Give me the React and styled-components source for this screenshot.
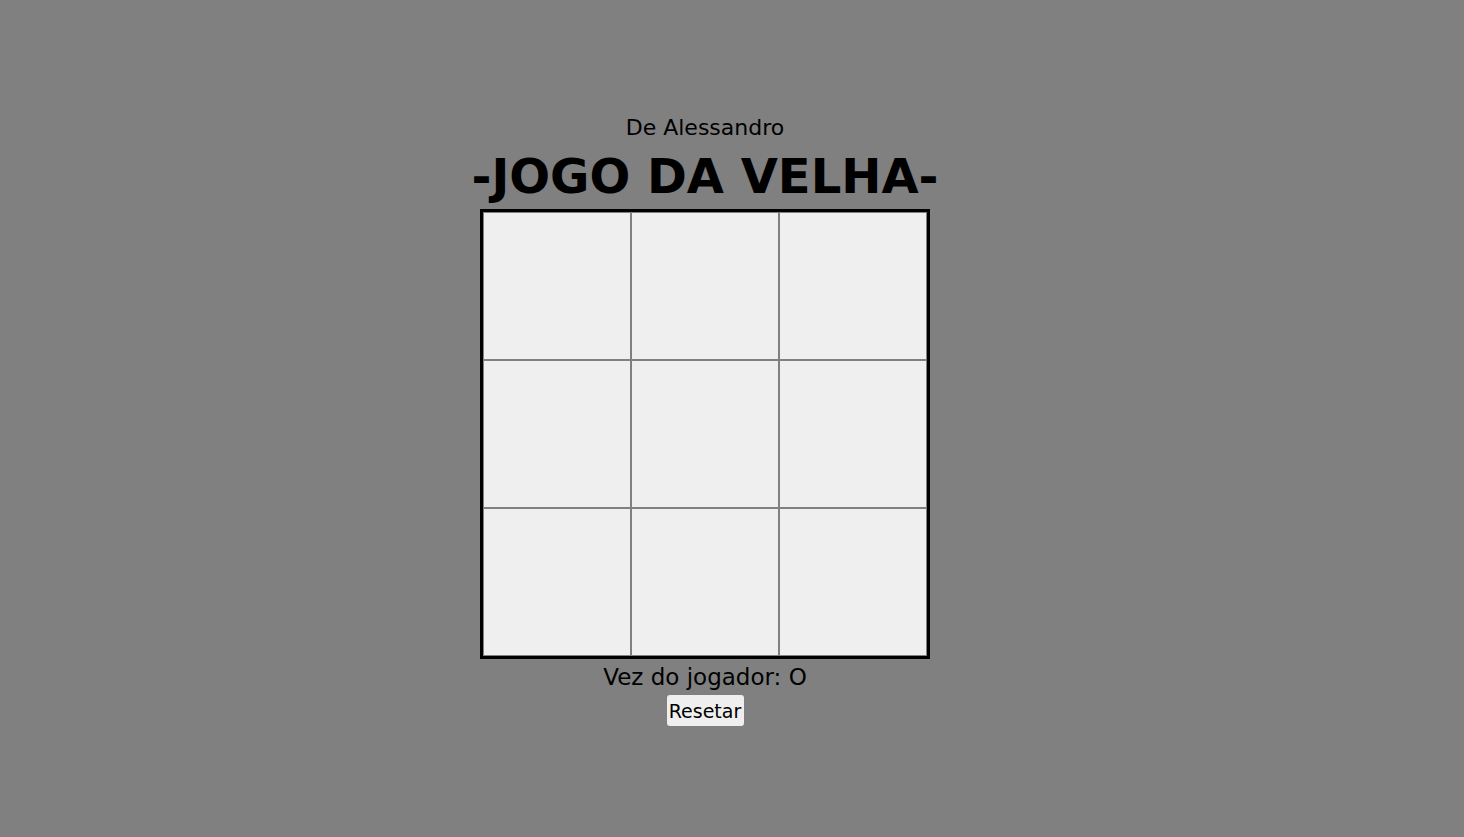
import React, { useState } from "react";
import styled, { createGlobalStyle } from "styled-components";

const Global = createGlobalStyle`
  html, body { margin: 0; padding: 0; background: #808080; }
  body { font-family: "Comic Sans MS", "DejaVu Sans", sans-serif; color: #000; }
`;

const Page = styled.div`
  box-sizing: border-box;
  min-height: 100vh;
  padding-right: 54px;
  display: flex;
  flex-direction: column;
  align-items: center;
  justify-content: center;
`;

const Author = styled.div`
  font-size: 22px;
  line-height: 33px;
  height: 33px;
`;

const Title = styled.h1`
  margin: 0;
  font-size: 48px;
  font-weight: bold;
  line-height: 65px;
  height: 65px;
  white-space: nowrap;
`;

const Board = styled.div`
  display: grid;
  grid-template-columns: repeat(3, 148px);
  grid-template-rows: repeat(3, 148px);
  border: 3px solid #000;
`;

const Cell = styled.button`
  box-sizing: border-box;
  width: 148px;
  height: 148px;
  margin: 0;
  padding: 0;
  border: 1px solid #808080;
  background: #efefef;
  font-family: inherit;
  font-size: 64px;
  cursor: pointer;
`;

const Status = styled.div`
  font-size: 23px;
  line-height: 36px;
  height: 36px;
`;

const ResetButton = styled.button`
  box-sizing: border-box;
  width: 77px;
  height: 31px;
  padding: 0;
  border: none;
  border-radius: 3px;
  background: #efefef;
  font-family: inherit;
  font-size: 19px;
  color: #000;
  cursor: pointer;
`;

export default function App() {
  const [cells, setCells] = useState(Array(9).fill(""));
  const [player, setPlayer] = useState("O");
  const play = (i) => {
    if (cells[i]) return;
    const next = cells.slice();
    next[i] = player;
    setCells(next);
    setPlayer(player === "O" ? "X" : "O");
  };
  return (
    <Page>
      <Global />
      <Author>De Alessandro</Author>
      <Title>-JOGO DA VELHA-</Title>
      <Board>
        {cells.map((c, i) => (
          <Cell key={i} onClick={() => play(i)}>{c}</Cell>
        ))}
      </Board>
      <Status>Vez do jogador: {player}</Status>
      <ResetButton onClick={() => { setCells(Array(9).fill("")); setPlayer("O"); }}>Resetar</ResetButton>
    </Page>
  );
}
